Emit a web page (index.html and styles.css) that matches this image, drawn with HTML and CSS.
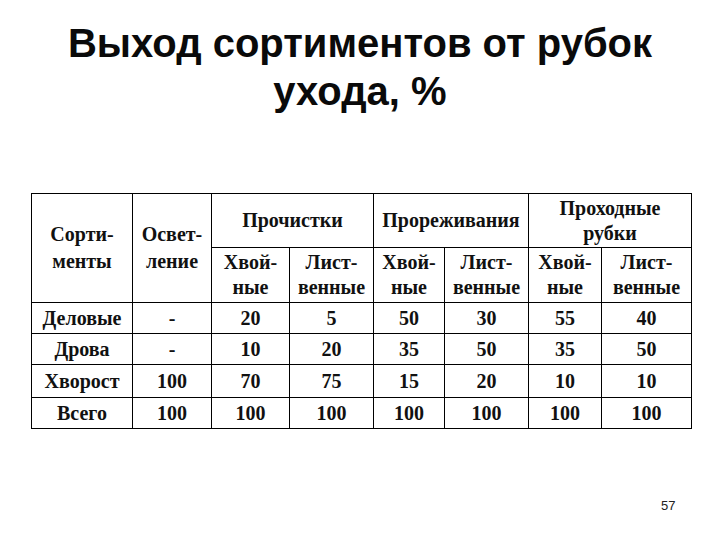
FILE: index.html
```html
<!DOCTYPE html>
<html lang="ru">
<head>
<meta charset="utf-8">
<link rel="stylesheet" href="styles.css">
</head>
<body>
<div class="slide">
  <h1 class="title">Выход сортиментов от рубок<br>ухода, %</h1>
  <table class="data">
    <colgroup>
      <col class="c1"><col class="c2"><col class="c3"><col class="c4"><col class="c5"><col class="c6"><col class="c7"><col class="c8">
    </colgroup>
    <tr class="h1row">
      <td rowspan="2" class="hd">Сорти-<br>менты</td>
      <td rowspan="2" class="hd">Освет-<br>ление</td>
      <td colspan="2">Прочистки</td>
      <td colspan="2">Прореживания</td>
      <td colspan="2">Проходные<br>рубки</td>
    </tr>
    <tr class="h2row">
      <td>Хвой-<br>ные</td>
      <td>Лист-<br>венные</td>
      <td>Хвой-<br>ные</td>
      <td>Лист-<br>венные</td>
      <td>Хвой-<br>ные</td>
      <td>Лист-<br>венные</td>
    </tr>
    <tr class="r">
      <td>Деловые</td><td>-</td><td>20</td><td>5</td><td>50</td><td>30</td><td>55</td><td>40</td>
    </tr>
    <tr class="r">
      <td>Дрова</td><td>-</td><td>10</td><td>20</td><td>35</td><td>50</td><td>35</td><td>50</td>
    </tr>
    <tr class="r r3">
      <td>Хворост</td><td>100</td><td>70</td><td>75</td><td>15</td><td>20</td><td>10</td><td>10</td>
    </tr>
    <tr class="r">
      <td>Всего</td><td>100</td><td>100</td><td>100</td><td>100</td><td>100</td><td>100</td><td>100</td>
    </tr>
  </table>
  <div class="pagenum">57</div>
</div>
</body>
</html>
```

FILE: styles.css
```css
html, body {
  margin: 0;
  padding: 0;
  background: #ffffff;
}

.slide {
  width: 720px;
  height: 540px;
  position: relative;
  overflow: hidden;
}

.title {
  margin: 19px 0 0 0;
  font-family: "Liberation Sans", Arial, sans-serif;
  font-weight: bold;
  font-size: 40px;
  line-height: 48px;
  text-align: center;
  color: #0a0a0a;
}

.data {
  margin: 78px 0 0 31px;
  border-collapse: collapse;
  table-layout: fixed;
  width: 660px;
  font-family: "Liberation Serif", "Times New Roman", serif;
  font-weight: bold;
  font-size: 20px;
  line-height: 25px;
  color: #111111;
}

.data td {
  border: 1px solid #000000;
  padding: 0;
  text-align: center;
  vertical-align: middle;
}

.c1 { width: 101px; }
.c2 { width: 79px; }
.c3 { width: 78px; }
.c4 { width: 84px; }
.c5 { width: 71px; }
.c6 { width: 84px; }
.c7 { width: 73px; }
.c8 { width: 90px; }

.h1row td { height: 53px; }
.h2row td { height: 54px; }
.r td { height: 30px; }
.r3 td { height: 32px; }

.data td.hd {
  line-height: 27px;
}

.pagenum {
  position: absolute;
  left: 661px;
  top: 498px;
  font-family: "Liberation Sans", Arial, sans-serif;
  font-size: 13px;
  color: #222222;
}
```
